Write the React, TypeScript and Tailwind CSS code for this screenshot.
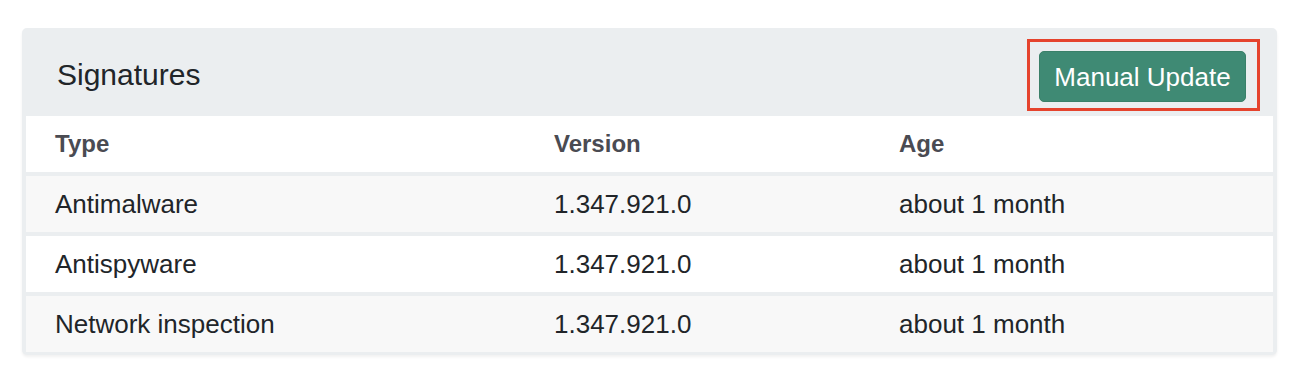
const rows = [
  { type: 'Antimalware', version: '1.347.921.0', age: 'about 1 month' },
  { type: 'Antispyware', version: '1.347.921.0', age: 'about 1 month' },
  { type: 'Network inspection', version: '1.347.921.0', age: 'about 1 month' },
];

export default function App() {
  return (
    <div
      className="min-h-screen bg-white pt-[28px] pl-[22px]"
      style={{ fontFamily: '"Liberation Sans", Arial, sans-serif' }}
    >
      {/* CARD */}
      <div className="w-[1255px] rounded-[5px] bg-[#ebeef0] px-[4px] pb-[3px] shadow-[0_2px_3px_rgba(0,0,0,0.06)]">
        {/* HEADER */}
        <div className="h-[88px] flex justify-between -mx-[4px] pl-[35px] pr-[17px]">
          <h2 className="self-center mt-[5px] text-[30px] text-[#212529] leading-none">Signatures</h2>
          <div className="self-start mt-[11px] border-[3px] border-[#e5432d] pt-[9px] pl-[9px] pr-[11px] pb-[6px]">
            <button className="w-[207px] h-[51px] rounded-[5px] bg-[#3f8a74] border border-[#3a8069] text-white text-[26px] leading-none">
              Manual Update
            </button>
          </div>
        </div>

        {/* TABLE */}
        <div className="bg-[#ebeef0]">
          <div className="grid grid-cols-[499px_345px_1fr] h-[56px] items-center bg-white text-[24px] font-bold text-[#4a4b52]">
            <div className="pl-[29px]">Type</div>
            <div className="pl-[29px]">Version</div>
            <div className="pl-[29px]">Age</div>
          </div>
          {rows.map((row, i) => (
            <div
              key={row.type}
              className={
                'grid grid-cols-[499px_345px_1fr] h-[56px] items-center mt-[4px] text-[26px] text-[#212529] ' +
                (i % 2 === 0 ? 'bg-[#f8f8f8]' : 'bg-white')
              }
            >
              <div className="pl-[29px]">{row.type}</div>
              <div className="pl-[29px]">{row.version}</div>
              <div className="pl-[29px]">{row.age}</div>
            </div>
          ))}
        </div>
      </div>
    </div>
  );
}
